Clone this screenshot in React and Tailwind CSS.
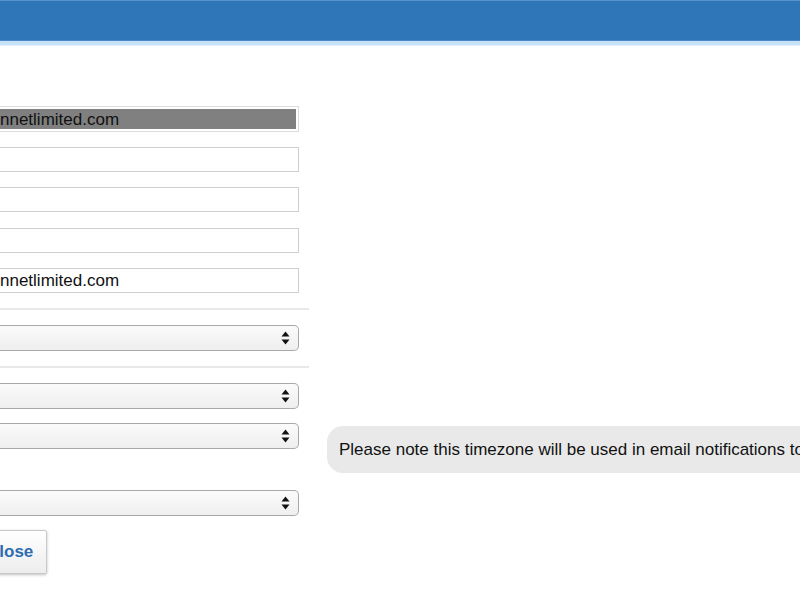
import React from "react";

function Arrows() {
  return (
    <svg width="9" height="14" viewBox="0 0 9 14" className="shrink-0">
      <path d="M4.5 0.5 L8.5 5.5 L0.5 5.5 Z" fill="#111" />
      <path d="M0.5 8.5 L8.5 8.5 L4.5 13.5 Z" fill="#111" />
    </svg>
  );
}

function Select({ className = "" }) {
  return (
    <div
      className={
        "h-[26px] w-[299px] flex items-center justify-end pr-[8px] rounded-r-[5px] border border-l-0 border-[#a9a9a9] bg-gradient-to-b from-[#fbfbfb] to-[#efefef] " +
        className
      }
    >
      <Arrows />
    </div>
  );
}

function TextInput({ value = "" }) {
  return (
    <div className="h-[25px] w-[299px] border border-l-0 border-[#cfcfcf] bg-white flex items-center text-[17px] text-[#111] leading-none">
      {value}
    </div>
  );
}

export default function App() {
  return (
    <div
      className="w-[800px] h-[600px] bg-white overflow-hidden flex flex-col"
      style={{ fontFamily: '"Liberation Sans", Arial, sans-serif' }}
    >
      <div className="h-[41px] bg-[#2f76b9] border-t border-[#5b93cc] border-b border-b-[#4a88c6]" />
      <div className="h-[4px] bg-[#c6e1f8]" />
      <div className="h-[1px] bg-[#e6f1fb]" />

      <div className="flex flex-col pt-[60px]">
        <div className="h-[26px] w-[299px] border border-l-0 border-[#dcdcdc] py-[2px] pr-[2px]">
          <div className="h-full bg-[#808080] flex items-center text-[17px] text-[#111] leading-none">
            nnetlimited.com
          </div>
        </div>
        <div className="mt-[15px]">
          <TextInput />
        </div>
        <div className="mt-[15px]">
          <TextInput />
        </div>
        <div className="mt-[16px]">
          <TextInput />
        </div>
        <div className="mt-[15px]">
          <TextInput value="nnetlimited.com" />
        </div>

        <div className="mt-[15px] h-[2px] w-[309px] bg-[#e8e8e8]" />
        <Select className="mt-[15px]" />
        <div className="mt-[15px] h-[2px] w-[309px] bg-[#e8e8e8]" />
        <Select className="mt-[15px]" />

        <div className="mt-[14px] flex items-start">
          <Select />
          <div className="ml-[28px] mt-[3px] h-[47px] flex-1 rounded-l-[16px] bg-[#e9e9e9] flex items-center pl-[12px] text-[17px] text-[#111] whitespace-nowrap overflow-hidden">
            Please note this timezone will be used in email notifications to
          </div>
        </div>

        <Select className="mt-[17px]" />

        <div className="mt-[14px] flex">
          <div className="-ml-[28px] h-[44px] pl-[14px] pr-[13px] border border-[#c9c9c9] rounded-[2px] bg-gradient-to-b from-white to-[#ededed] shadow-[0_1px_3px_rgba(0,0,0,0.25)] flex items-center text-[17px] font-bold text-[#2d6db0]">
            Close
          </div>
        </div>
      </div>
    </div>
  );
}
